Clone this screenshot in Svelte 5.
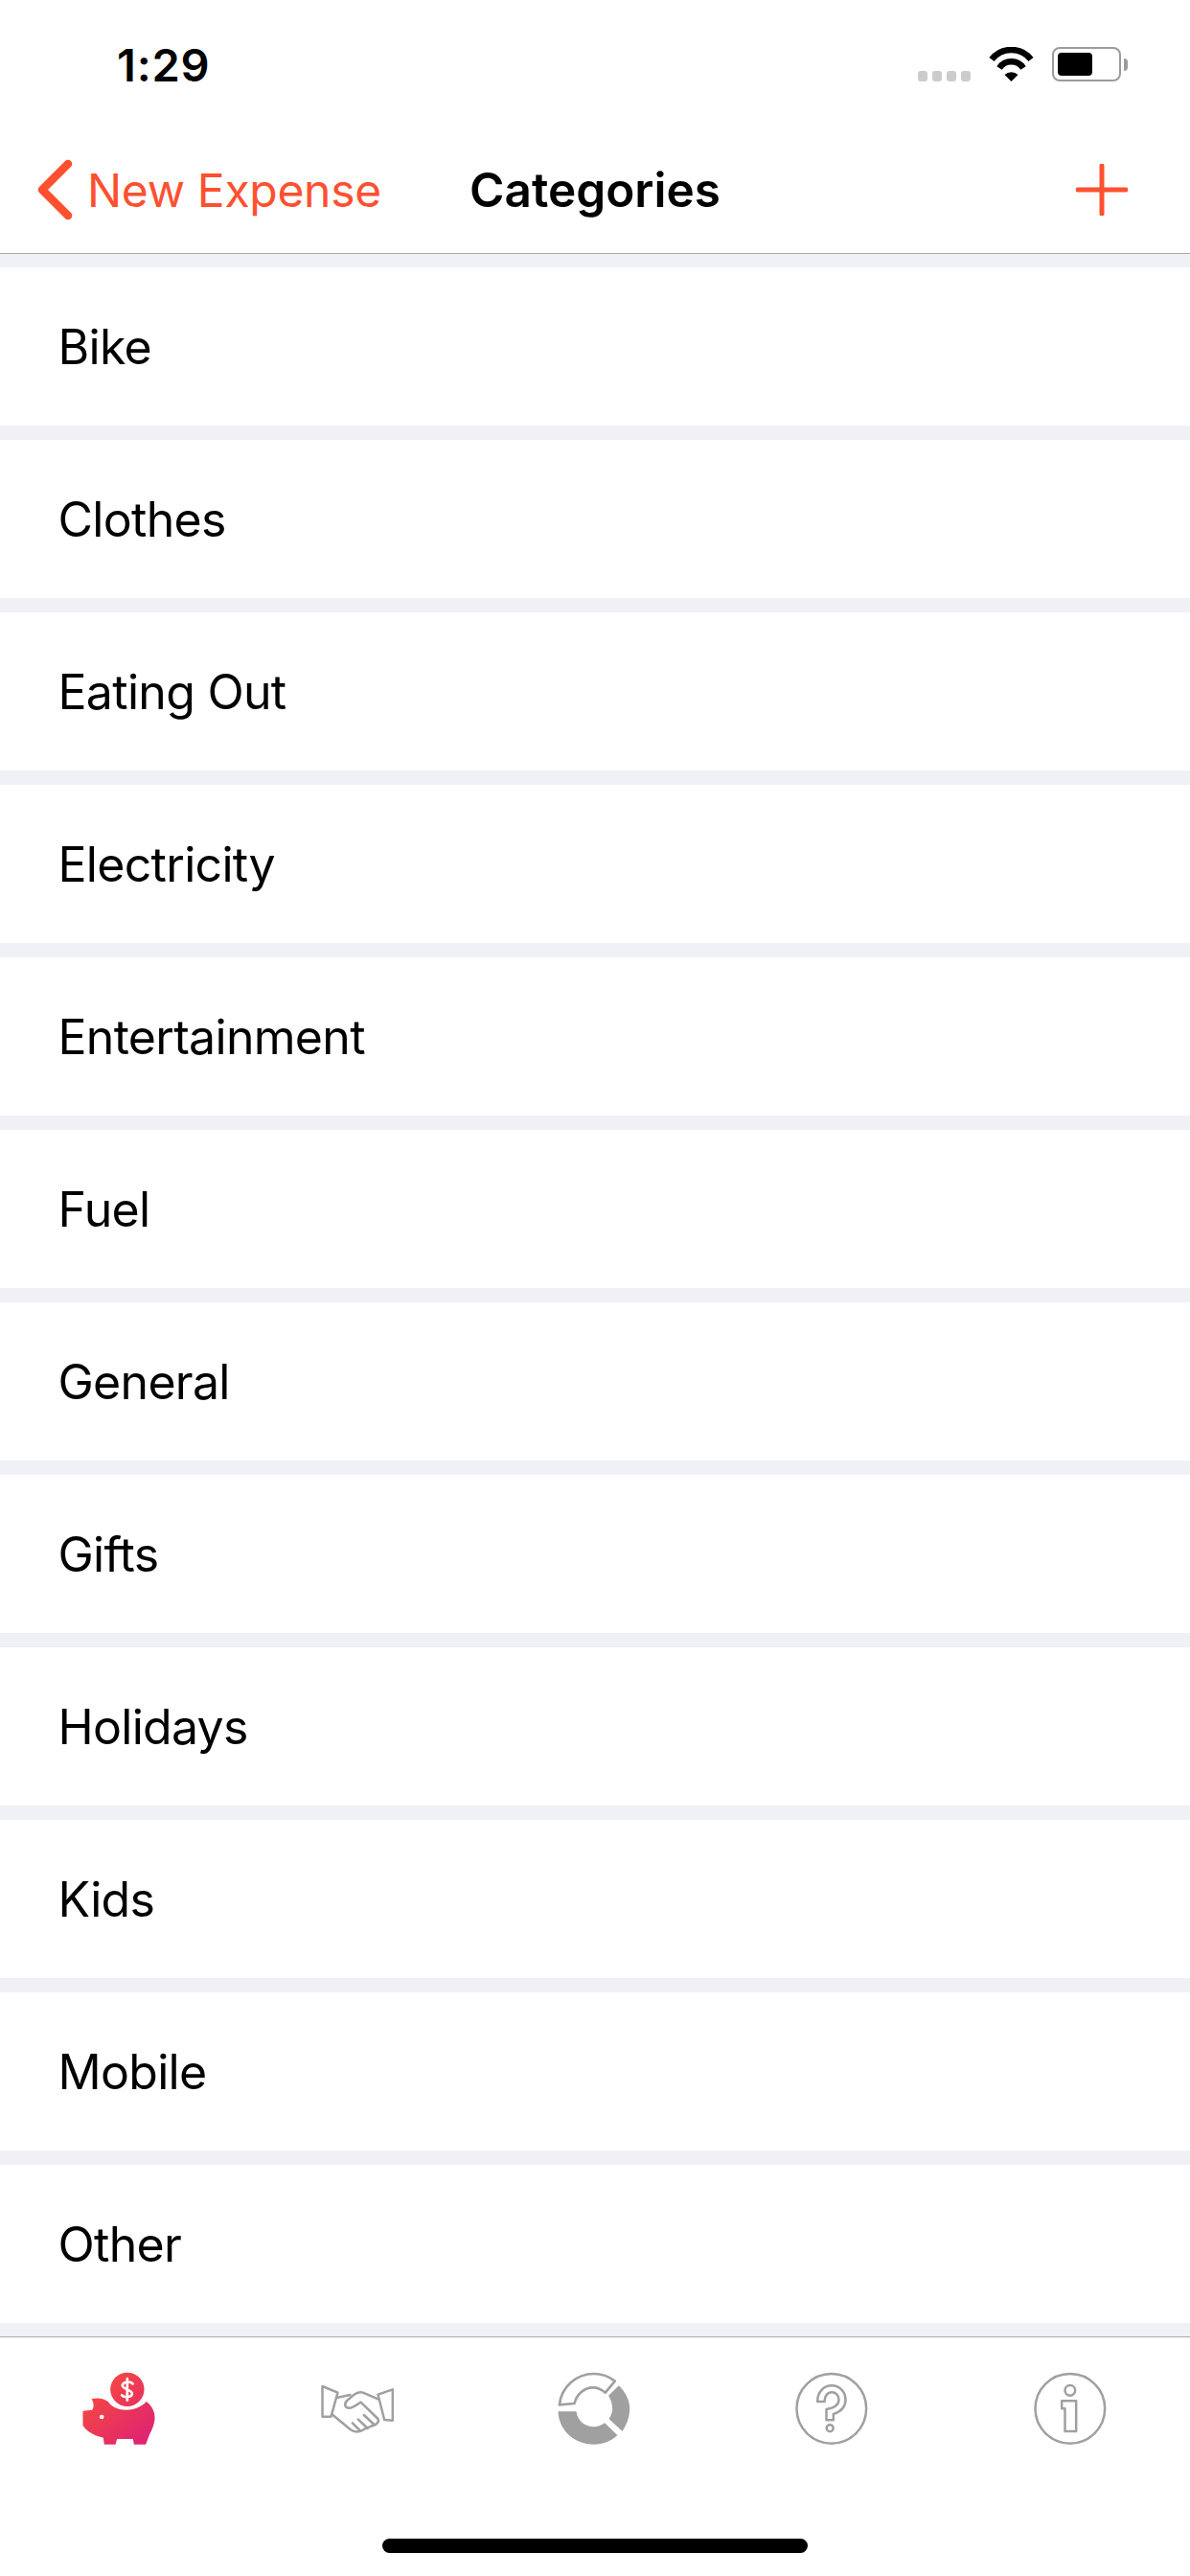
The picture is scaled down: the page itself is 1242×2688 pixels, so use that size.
<script>
  const categories = ['Bike','Clothes','Eating Out','Electricity','Entertainment','Fuel','General','Gifts','Holidays','Kids','Mobile','Other'];
</script>

<div class="page">
  <header class="status">
    <span class="time">1:29</span>
    <div class="indicators">
      <div class="signal"><i></i><i></i><i></i><i></i></div>
      <svg class="wifi" viewBox="0 0 47 36" aria-hidden="true">
        <path d="M3 13A26 26 0 0 1 44 13" fill="none" stroke="#000" stroke-width="6.5"/>
        <path d="M11 22A15 15 0 0 1 36 22" fill="none" stroke="#000" stroke-width="6.5"/>
        <path d="M23.500 36L16.500 29A10 10 0 0 1 30.500 29Z" fill="#000"/>
      </svg>
      <div class="battery"><div class="charge"></div></div>
      <div class="nub"></div>
    </div>
  </header>

  <nav class="nav">
    <div class="back">
      <svg class="chev" viewBox="0 0 40 64" aria-hidden="true"><path d="M33 5L6 32L33 59" fill="none" stroke="#ff5030" stroke-width="8.500" stroke-linecap="round" stroke-linejoin="round"/></svg>
      <span>New Expense</span>
    </div>
    <h1>Categories</h1>
    <svg class="plus" viewBox="0 0 54 54" aria-hidden="true"><path d="M27 2V52M2 27H52" fill="none" stroke="#ff5030" stroke-width="5" stroke-linecap="round"/></svg>
  </nav>

  <ul class="list">
    {#each categories as c}
      <li>{c}</li>
    {/each}
  </ul>

  <footer class="tabs">
    <div class="tab">
      <svg viewBox="139.500 228 225 225" aria-hidden="true">
        <defs>
          <linearGradient id="pg" gradientUnits="userSpaceOnUse" x1="150" y1="240" x2="350" y2="450">
            <stop offset="0" stop-color="#fa4f38"/>
            <stop offset="1" stop-color="#dc2176"/>
          </linearGradient>
        </defs>
        <circle cx="277" cy="280" r="53" fill="url(#pg)"/>
        <path d="M138 348C148 345 158 345 167 344C174 335 172 320 165 310C180 305 200 306 217 318C238 352 305 354 337 318C355 332 364 350 363 372C362 392 352 410 345 425L335 452H298L295 435H245L240 452H205L202 431C175 425 150 412 138 392Z" fill="url(#pg)"/>
        <circle cx="197" cy="366" r="7" fill="#fff"/>
        <path d="M294 262C288 254 266 254 262 266C258 280 294 280 292 294C290 306 266 306 260 298M277 246V314" fill="none" stroke="#fff" stroke-width="8" stroke-linecap="round"/>
      </svg>
    </div>
    <div class="tab">
      <svg viewBox="883.500 228 225 225" aria-hidden="true">
        <g fill="none" stroke="#a0a0a0" stroke-width="7.500" stroke-linejoin="round" stroke-linecap="round">
          <path d="M888 270L936 290L915 365H888Z"/>
          <path d="M1108 280L1062 296L1082 375L1108 377Z"/>
          <path d="M936 305L975 297"/>
          <path d="M1062 310L1015 290C1005 286 995 290 985 298L965 315C955 325 958 338 972 338C985 338 995 328 1008 320L1062 372C1068 385 1052 392 1044 394"/>
          <path d="M918 358L975 405C990 416 1005 414 1020 404L1048 392"/>
          <path d="M982 385L1005 408M1000 374L1030 402M1018 360L1050 390"/>
        </g>
      </svg>
    </div>
    <div class="tab">
      <svg viewBox="127.500 228 225 225" aria-hidden="true">
        <path d="M126 349H183C186 378 210 397 238 397C251 397 263 392 272 385L312 424C292 442 266 452 238 452C176 452 128 408 126 349Z" fill="#a0a0a0"/>
        <path d="M316 268C338 290 350 314 350 340C350 368 340 392 327 411L285 372C292 362 296 352 296 340C296 326 291 311 284 299Z" fill="#a0a0a0"/>
        <path d="M130 328C136 272 182 231 238 231C262 231 285 239 304 254L274 290C262 280 250 274 236 274C208 274 184 294 177 324Z" fill="none" stroke="#a0a0a0" stroke-width="8" stroke-linejoin="round"/>
      </svg>
    </div>
    <div class="tab">
      <svg viewBox="871.500 228 225 225" aria-hidden="true">
        <g fill="none" stroke="#a0a0a0" stroke-width="7.500" stroke-linejoin="round">
          <circle cx="982" cy="340" r="109"/>
          <path d="M938 318C938 287 958 268 983 268C1008 268 1026 288 1026 312C1026 335 1010 350 988 357V376H966V342C990 338 1005 328 1005 312C1005 298 995 289 983 289C970 289 960 300 960 318Z"/>
          <circle cx="977" cy="401" r="10.500"/>
        </g>
      </svg>
    </div>
    <div class="tab">
      <svg viewBox="835.500 228 225 225" aria-hidden="true">
        <g fill="none" stroke="#a0a0a0" stroke-width="7.500" stroke-linejoin="round">
          <circle cx="949" cy="340" r="109"/>
          <circle cx="949" cy="283" r="16"/>
          <path d="M923 316H968V411H933V340H923Z"/>
        </g>
      </svg>
    </div>
  </footer>
  <div class="home-row"><div class="home"></div></div>
</div>

<style>
  :global(body) { margin: 0; background: #fff; }
  .page {
    width: 1242px; height: 2688px; display: flex; flex-direction: column;
    background: #f0f1f6; font-family: Inter, "Liberation Sans", sans-serif; color: #000; overflow: hidden;
  }
  .status { height: 132px; background: #fff; display: flex; align-items: flex-start; justify-content: space-between; }
  .time { font-size: 47px; font-weight: 600; line-height: 56px; margin: 40px 0 0 122px; letter-spacing: 0.8px; }
  .indicators { display: flex; align-items: flex-end; margin: 49px 65px 0 0; height: 36px; }
  .signal { display: flex; gap: 5px; margin-right: 19px; }
  .signal i { width: 10px; height: 11px; border-radius: 3px; background: #ccc; }
  .wifi { width: 47px; height: 36px; margin-right: 19px; }
  .battery { width: 72px; height: 36px; box-sizing: border-box; border: 2.500px solid #9b9b9b; border-radius: 8px; padding: 4px; }
  .charge { width: 36px; height: 100%; background: #000; border-radius: 4px; }
  .nub { width: 4px; height: 13px; background: #9b9b9b; border-radius: 0 4px 4px 0; margin: 0 0 11.500px 3px; }
  .nav {
    height: 133px; box-sizing: border-box; background: #fff; border-bottom: 1.500px solid #a9a9ab;
    display: flex; align-items: center; position: relative; padding: 0 65px 0 38px; justify-content: space-between;
  }
  .back { display: flex; align-items: center; color: #ff5030; font-size: 48px; letter-spacing: -0.3px; }
  .chev { width: 40px; height: 64px; margin-right: 13px; }
  .nav h1 { margin: 0; font-size: 49.500px; font-weight: 600; position: absolute; left: 0; right: 0; text-align: center; }
  .plus { width: 54px; height: 54px; }
  .list { flex: none; margin: 0; padding: 14px 0; list-style: none; display: flex; flex-direction: column; gap: 15px; }
  .list li { height: 165px; background: #fff; display: flex; align-items: center; padding-left: 60.500px; font-size: 50px; letter-spacing: -0.7px; }
  .tabs {
    flex: none; height: 173px; box-sizing: border-box; background: #fff; border-top: 1.500px solid #a9a9ab;
    display: grid; grid-template-columns: repeat(5, 248px); padding-top: 36.500px;
  }
  .tab { display: flex; justify-content: center; }
  .tab svg { width: 75px; height: 75px; overflow: visible; }
  .home-row { flex: 1; background: #fff; display: flex; justify-content: center; }
  .home { width: 444px; height: 15px; background: #000; border-radius: 8px; margin-top: 38px; }
</style>
